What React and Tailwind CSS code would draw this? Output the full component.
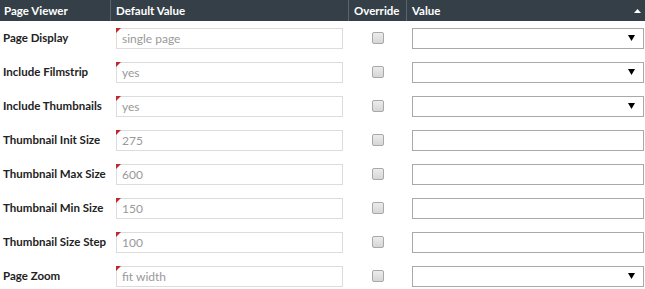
import React from "react";

const rows = [
  { label: "Page Display", value: "single page", select: true },
  { label: "Include Filmstrip", value: "yes", select: true },
  { label: "Include Thumbnails", value: "yes", select: true },
  { label: "Thumbnail Init Size", value: "275", select: false },
  { label: "Thumbnail Max Size", value: "600", select: false },
  { label: "Thumbnail Min Size", value: "150", select: false },
  { label: "Thumbnail Size Step", value: "100", select: false },
  { label: "Page Zoom", value: "fit width", select: true },
];

const Row = ({ row }) => (
  <div className="flex h-[34px] items-center">
    <div className="w-[111px] pl-[3px] text-[11.5px] font-bold text-[#222] whitespace-nowrap">
      {row.label}
    </div>
    <div className="w-[238px] pl-[5px] pr-[6px]">
      <div className="relative h-[21px] border border-[#dcdcdc] bg-white pl-[5px] text-[12px] leading-[19px] text-[#999]">
        {/* red marker in the corner */}
        <span className="absolute -left-px -top-px h-0 w-0 border-t-[5px] border-r-[5px] border-t-[#c0282d] border-r-transparent" />
        {row.value}
      </div>
    </div>
    <div className="flex w-[58px] justify-center">
      <div className="h-[12px] w-[12px] rounded-[2px] border border-[#a8a8a8] bg-gradient-to-b from-[#ececec] to-[#d6d6d6]" />
    </div>
    <div className="flex-1 pl-[5px] pr-px">
      <div className="flex h-[21px] items-center justify-end border border-[#a9a9a9] bg-white pr-[8px]">
        {row.select && (
          <svg width="7" height="6" viewBox="0 0 7 6">
            <path d="M0 0h7L3.5 6z" fill="#000" />
          </svg>
        )}
      </div>
    </div>
  </div>
);

export default function App() {
  return (
    <div className="w-[645px] h-[289px] bg-white font-['Lato',sans-serif] overflow-hidden">
      <div className="flex h-[21px] items-center bg-[#343f47] text-[11.5px] font-bold text-white">
        <div className="w-[111px] pl-[4px] border-r border-[#5b656c] h-full flex items-center">Page Viewer</div>
        <div className="w-[238px] pl-[5px] border-r border-[#5b656c] h-full flex items-center">Default Value</div>
        <div className="w-[58px] pl-[5px] border-r border-[#5b656c] h-full flex items-center">Override</div>
        <div className="flex-1 pl-[5px] pr-[4px] h-full flex items-center justify-between">
          <span>Value</span>
          <svg width="7" height="4" viewBox="0 0 7 4">
            <path d="M0 4h7L3.5 0z" fill="#fff" />
          </svg>
        </div>
      </div>
      {rows.map((r) => (
        <Row key={r.label} row={r} />
      ))}
    </div>
  );
}
